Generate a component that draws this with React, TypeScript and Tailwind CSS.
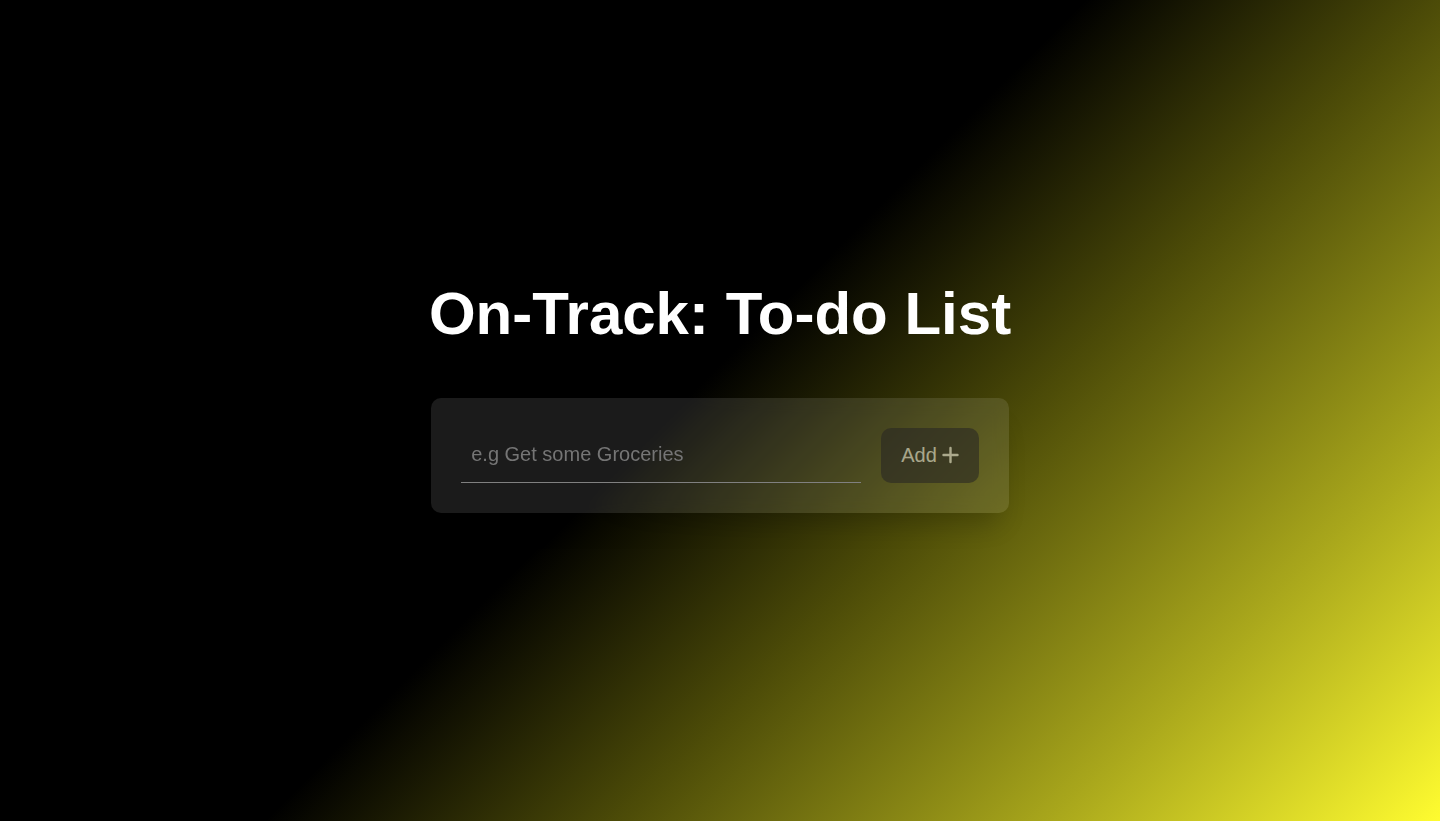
import { useState } from "react";
import type { FormEvent } from "react";

export default function App() {
  const [task, setTask] = useState("");
  const submit = (event: FormEvent) => {
    event.preventDefault();
    setTask("");
  };

  return (
    <main className="flex min-h-screen flex-col items-center justify-center gap-12 bg-[linear-gradient(135deg,#000_48%,#4e4d08_64%,#aaa81c_83%,#fffc30_100%)] px-4 pb-[30px] font-['Liberation_Sans',Arial,sans-serif]">
      <h1 className="text-center text-6xl leading-[72px] font-bold text-white">On-Track: To-do List</h1>
      <form
        onSubmit={submit}
        className="flex items-stretch gap-5 rounded-[10px] bg-[#ffffff1b] p-[30px] shadow-[0_20px_25px_-10px_#00000033] backdrop-blur-sm"
      >
        <input
          type="text"
          aria-label="New task"
          value={task}
          onChange={(event) => setTask(event.target.value)}
          placeholder="e.g Get some Groceries"
          className="w-[400px] border-b border-[#808080] bg-transparent px-2.5 pb-0.5 text-xl leading-6 text-white outline-none placeholder:text-[#757575]"
        />
        <button
          type="submit"
          disabled={!task}
          className="flex h-[55px] items-center gap-1 rounded-[10px] bg-[#2b2926] px-5 pb-0.5 text-xl text-[#e4e2d6] disabled:opacity-60"
        >
          Add
          <svg className="size-[18px]" viewBox="0 0 18 18" fill="none" stroke="currentColor" strokeWidth="2.4" strokeLinecap="round" aria-hidden="true">
            <path d="M9.5 2v14M2.5 9h14" />
          </svg>
        </button>
      </form>
    </main>
  );
}
